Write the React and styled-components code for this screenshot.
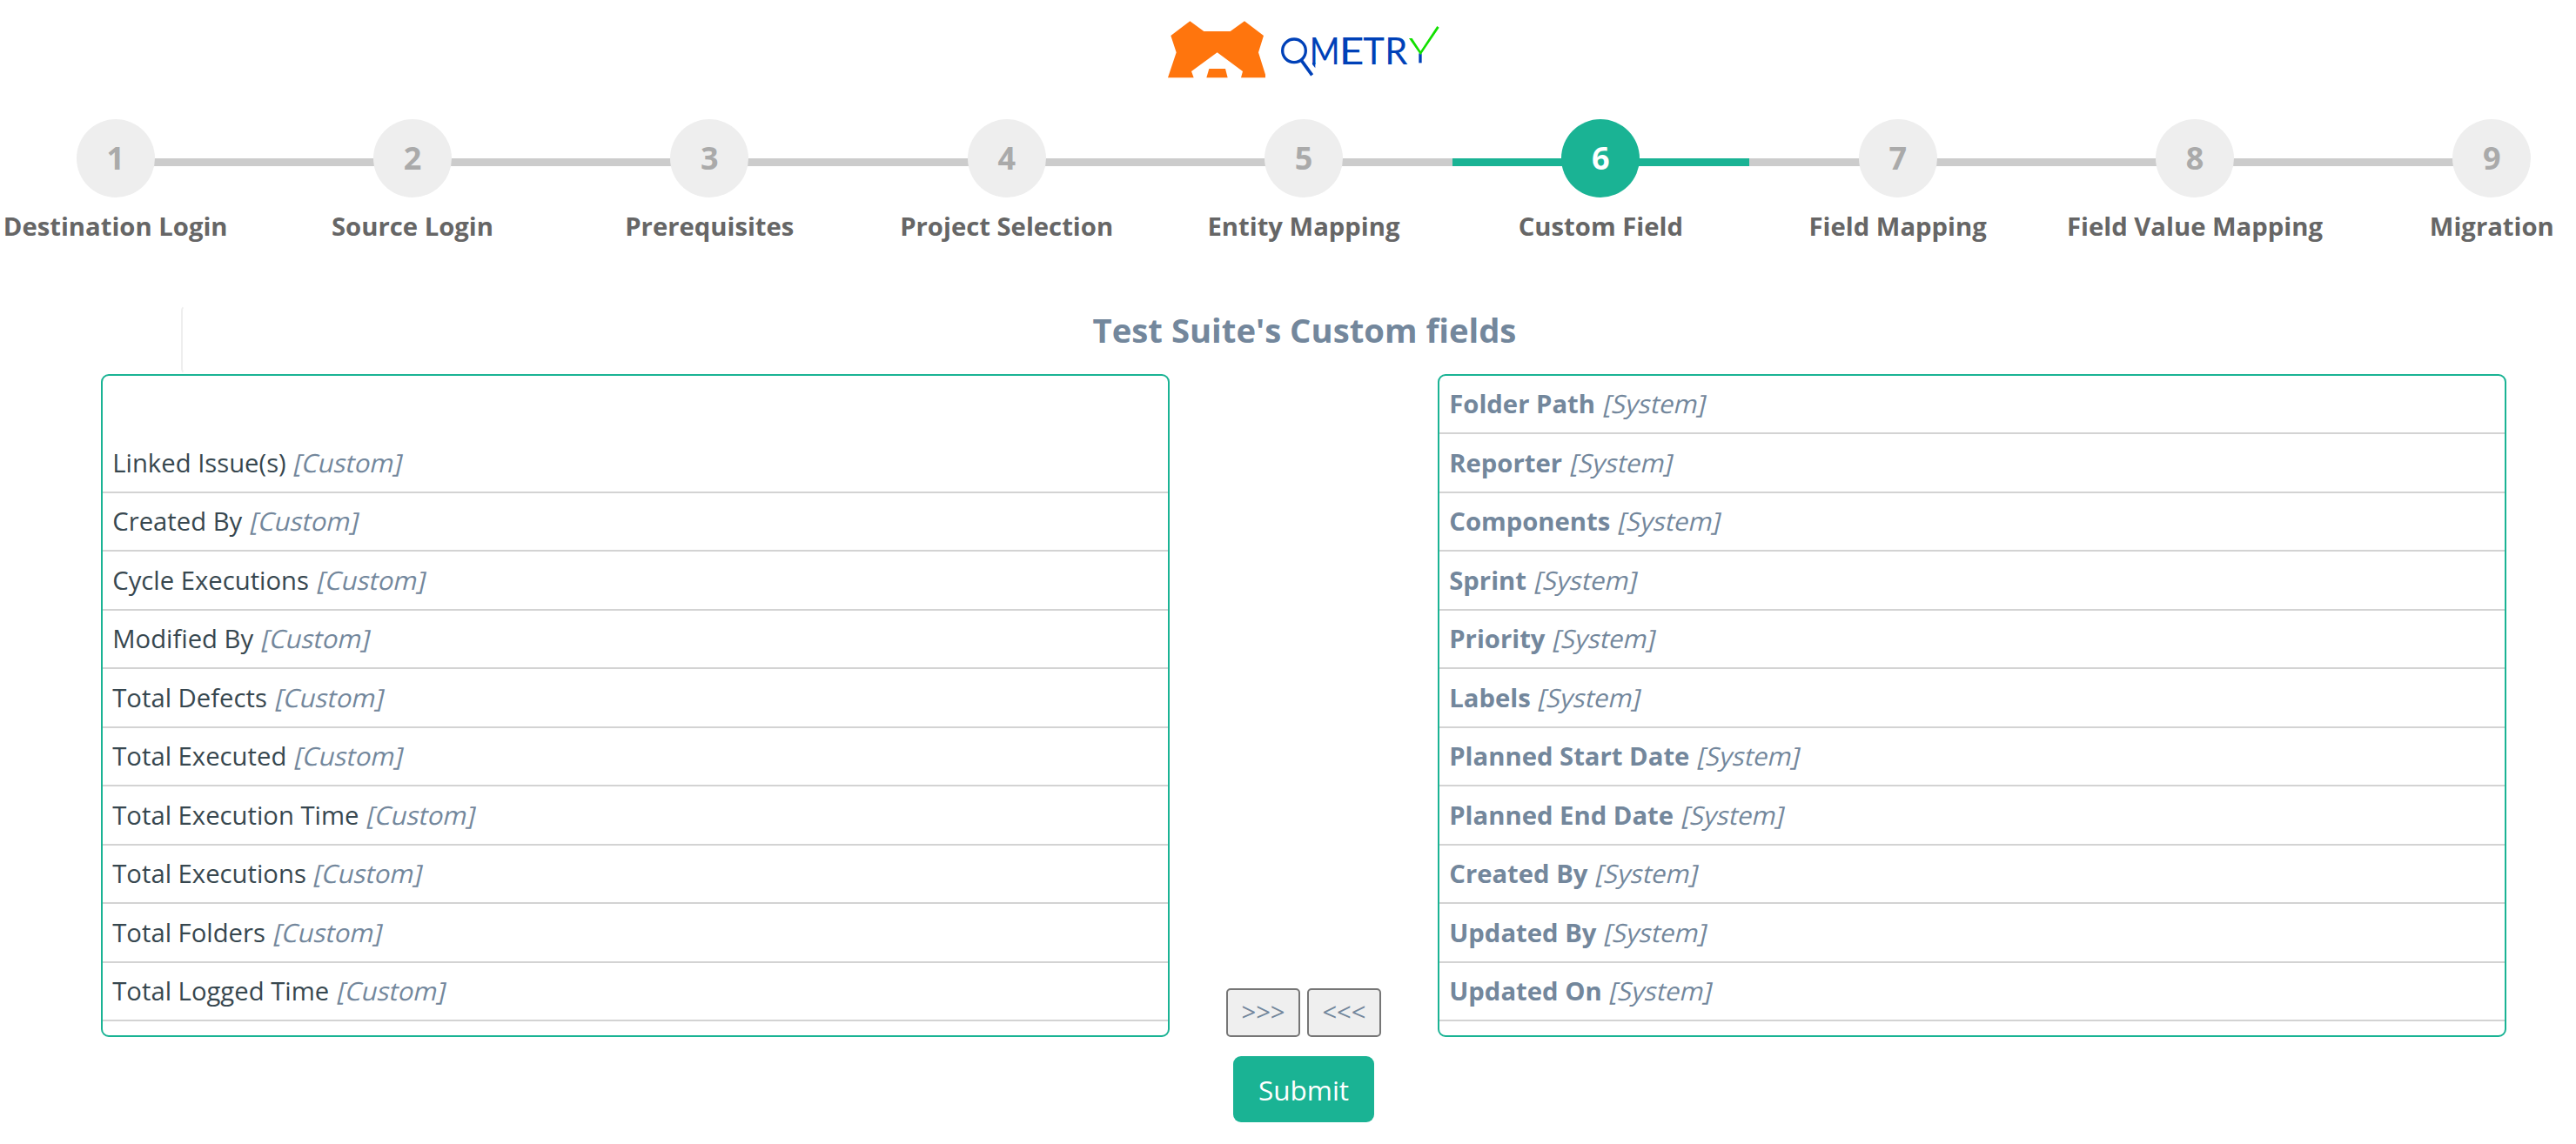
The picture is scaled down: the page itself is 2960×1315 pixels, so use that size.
import React from 'react';
import styled, { createGlobalStyle } from 'styled-components';

const GlobalStyle = createGlobalStyle`
  * {
    box-sizing: border-box;
  }

  body {
    margin: 0;
    background: #fff;
    color: #73879c;
    font-family: 'Open Sans', 'Noto Sans', sans-serif;
    font-size: 29.25px;
    line-height: 1.471;
  }
`;

const Page = styled.div`
  height: 1315px;
  padding: 0 80px 0 116px;
  overflow: hidden;
`;

const Header = styled.header`
  display: flex;
  justify-content: center;
  height: 137px;
`;

const Steps = styled.ul`
  display: grid;
  grid-template-columns: repeat(9, 1fr);
  height: 213.7px;
  margin: 0 -154px;
  padding: 0;
  list-style: none;
`;

const Step = styled.li`
  text-align: center;
`;

const StepMarker = styled.div`
  display: flex;
  align-items: center;
  height: 90px;
`;

const StepLine = styled.span`
  flex: 1;
  height: 9px;
  margin-top: 9px;
  background: ${({ $hidden, $active }) => ($hidden ? 'transparent' : $active ? '#1ab394' : '#ccc')};
`;

const StepNumber = styled.span`
  position: relative;
  width: 90px;
  height: 90px;
  border-radius: 50%;
  background: ${({ $active }) => ($active ? '#1ab394' : '#eee')};
  color: ${({ $active }) => ($active ? '#fff' : '#aaa')};
  font-size: 36px;
  font-weight: 700;
  line-height: 90px;
`;

// the lines run a little under the circle so its curve leaves no gap
const LineBefore = styled(StepLine)`
  margin-right: -5px;
`;

const LineAfter = styled(StepLine)`
  margin-left: -5px;
`;

const StepLabel = styled.div`
  margin-top: 12.6px;
  color: #666;
  font-weight: 700;
  line-height: 40px;
  white-space: nowrap;
`;

const Title = styled.h2`
  height: 79px;
  margin: 0 90px 0 92px;
  border: 2px solid transparent;
  border-left-color: #eee;
  border-radius: 6px;
  font-size: 38.25px;
  font-weight: 700;
  line-height: 52px;
  text-align: center;
`;

const Board = styled.div`
  display: grid;
  grid-template-columns: 1228px 308px 1228px;
  align-items: end;
`;

const FieldList = styled.ul`
  height: 762px;
  margin: 0;
  padding: 0;
  overflow: hidden;
  border: 2px solid #1ab394;
  border-radius: 9px;
  list-style: none;
`;

const Field = styled.li`
  height: 67.5px;
  padding: 0.5px 11.25px 0;
  border-bottom: 2px solid ${({ $blank }) => ($blank ? 'transparent' : '#d3d3d3')};
  line-height: 64px;
  white-space: nowrap;
`;

const FieldName = styled.span`
  color: ${({ $system }) => ($system ? 'inherit' : '#37474f')};
  font-weight: ${({ $system }) => ($system ? 700 : 400)};
`;

// slanted upright face, not the true italic
const FieldType = styled.span`
  display: inline-block;
  transform: skewX(-13deg);
  transform-origin: 0 67%;
`;

const MoveButtons = styled.div`
  display: flex;
  justify-content: center;
  gap: 8.3px;
`;

const MoveButton = styled.button`
  width: 84.7px;
  height: 56px;
  padding: 0;
  border: 2px solid #767676;
  border-radius: 5px;
  background: #efefef;
  color: inherit;
  font: inherit;
`;

const Actions = styled.div`
  display: flex;
  justify-content: center;
  padding-top: 22.3px;
`;

const SubmitButton = styled.button`
  width: 162px;
  height: 76px;
  padding: 1px 0 0;
  border: 0;
  border-radius: 9px;
  background: #1ab394;
  color: #fff;
  font-family: inherit;
  font-size: 31.5px;
  line-height: 75px;
`;

const Logo = () => (
  <svg width="360" height="110" viewBox="-6 0 1080 330" role="img" aria-label="QMETRY">
    <path
      fill="#ff750d"
      d="M66 268 95 181 76 123 142 73 190 108H281L330 73 396 123 378 181 402 257V268H318L324 246 236 181 147 246 155 268ZM208 237H264L272 268H199Z"
    />
    <g fill="none" stroke="#0041b8" strokeWidth="10">
      <circle cx="501" cy="175" r="40" />
      <path d="M526 208 563 259" strokeWidth="11" />
      <path d="M936 184V217" />
    </g>
    <path fill="#0041b8" d="M564 216H574V235L564 222Z" />
    <g fill="#0041b8" fontFamily="Lato, sans-serif" fontSize="125">
      <text transform="translate(554 221) scale(0.9 1)">M</text>
      <text transform="translate(656 221) scale(1.19 1)">E</text>
      <text x="739" y="221">T</text>
      <text x="814" y="221">R</text>
    </g>
    <path d="M897 132H908L937 176 994 90 1001 95 937 190Z" fill="#12e000" />
  </svg>
);

const steps = [
  'Destination Login',
  'Source Login',
  'Prerequisites',
  'Project Selection',
  'Entity Mapping',
  'Custom Field',
  'Field Mapping',
  'Field Value Mapping',
  'Migration',
];

const currentStep = 5;

const customFields = [
  'Linked Issue(s)',
  'Created By',
  'Cycle Executions',
  'Modified By',
  'Total Defects',
  'Total Executed',
  'Total Execution Time',
  'Total Executions',
  'Total Folders',
  'Total Logged Time',
];

const systemFields = [
  'Folder Path',
  'Reporter',
  'Components',
  'Sprint',
  'Priority',
  'Labels',
  'Planned Start Date',
  'Planned End Date',
  'Created By',
  'Updated By',
  'Updated On',
];

const App = () => {
  return (
    <Page>
      <GlobalStyle />
      <Header>
        <Logo />
      </Header>
      <Steps>
        {steps.map((label, i) => (
          <Step key={label}>
            <StepMarker>
              <LineBefore $active={i === currentStep} $hidden={i === 0} />
              <StepNumber $active={i === currentStep}>{i + 1}</StepNumber>
              <LineAfter $active={i === currentStep} $hidden={i === steps.length - 1} />
            </StepMarker>
            <StepLabel>{label}</StepLabel>
          </Step>
        ))}
      </Steps>
      <Title>Test Suite's Custom fields</Title>
      <Board>
        <FieldList>
          <Field $blank />
          {customFields.map((name) => (
            <Field key={name}>
              <FieldName>{name}</FieldName> <FieldType>[Custom]</FieldType>
            </Field>
          ))}
        </FieldList>
        <MoveButtons>
          <MoveButton>&gt;&gt;&gt;</MoveButton>
          <MoveButton>&lt;&lt;&lt;</MoveButton>
        </MoveButtons>
        <FieldList>
          {systemFields.map((name) => (
            <Field key={name}>
              <FieldName $system>{name}</FieldName> <FieldType>[System]</FieldType>
            </Field>
          ))}
        </FieldList>
      </Board>
      <Actions>
        <SubmitButton>Submit</SubmitButton>
      </Actions>
    </Page>
  );
};

export default App;
